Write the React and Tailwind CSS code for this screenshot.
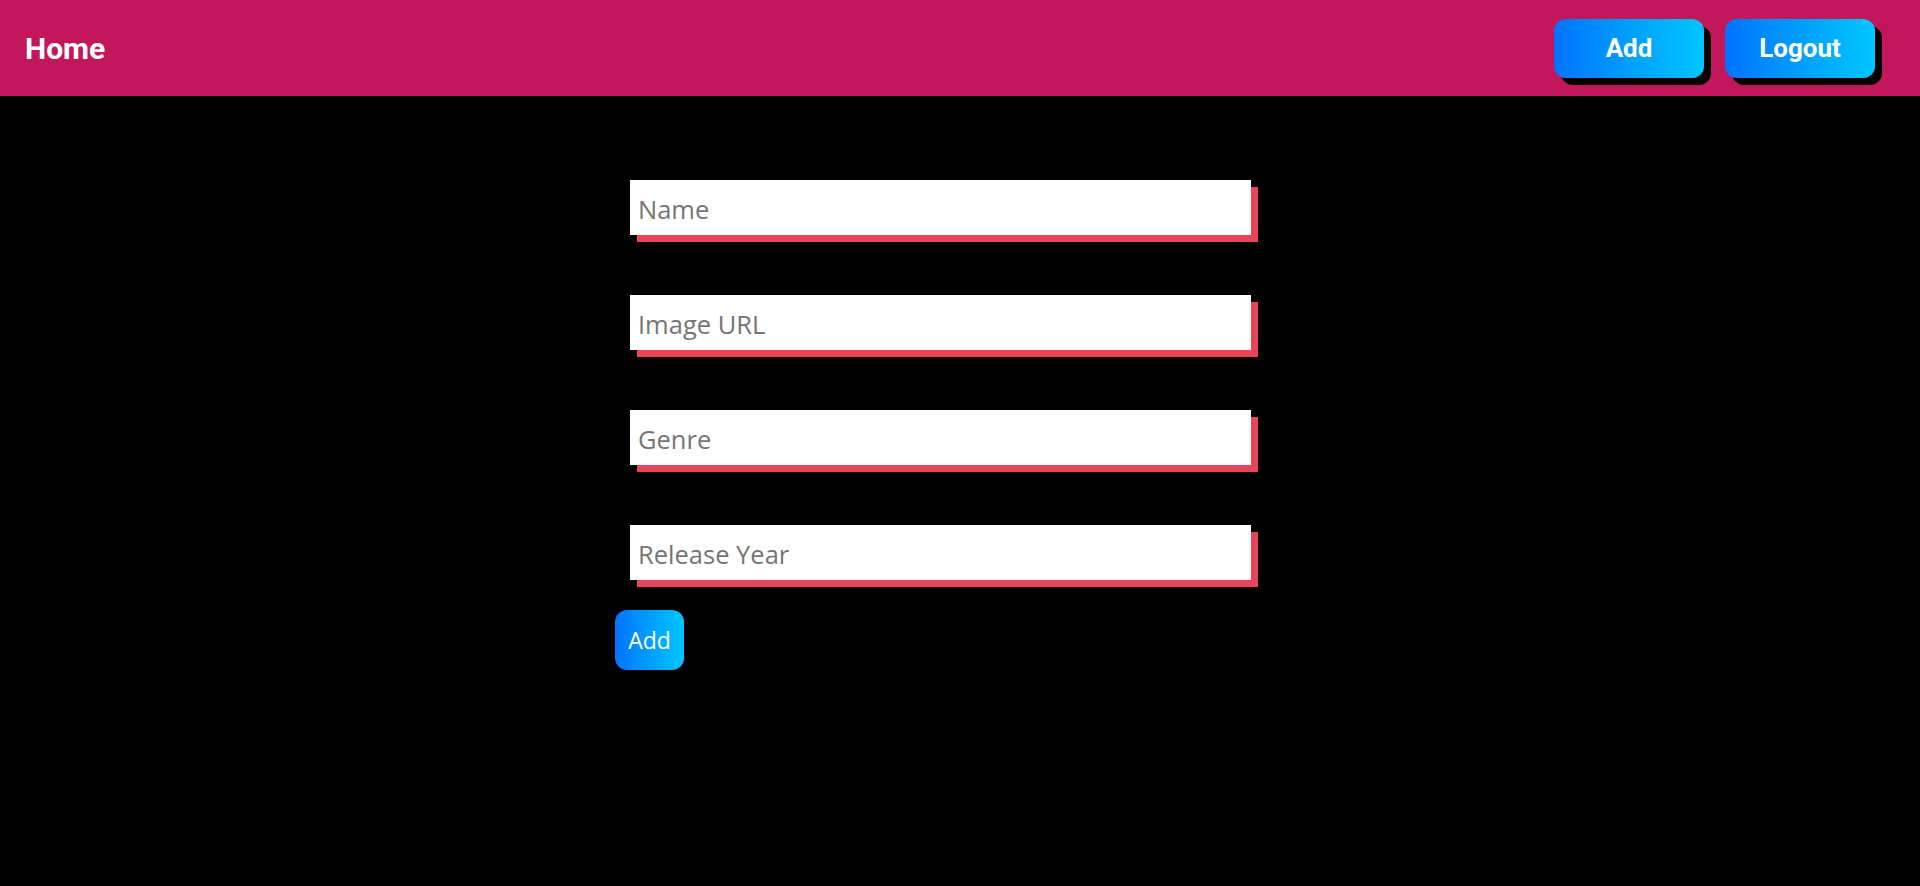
export default function App() {
  const fields = ["Name", "Image URL", "Genre", "Release Year"];
  return (
    <div className="min-h-[886px] w-full bg-black">
      <header className="flex h-[96px] items-center justify-between bg-[#c2185b] pl-[25px] pr-[45px]">
        <div className="font-['Roboto',sans-serif] text-[30px] font-bold text-white">Home</div>
        <div className="flex items-center gap-[21px]">
          <button className="h-[59px] w-[150px] rounded-[12px] bg-gradient-to-r from-[#0072ff] to-[#00c6ff] font-['Roboto',sans-serif] text-[26px] font-bold text-white shadow-[7px_7px_0_#000]">
            Add
          </button>
          <button className="h-[59px] w-[150px] rounded-[12px] bg-gradient-to-r from-[#0072ff] to-[#00c6ff] font-['Roboto',sans-serif] text-[26px] font-bold text-white shadow-[7px_7px_0_#000]">
            Logout
          </button>
        </div>
      </header>
      <div className="flex justify-center">
        <form className="flex w-[690px] flex-col pt-[84px]">
          <div className="flex flex-col gap-[60px]">
            {fields.map((f) => (
              <input
                key={f}
                placeholder={f}
                className="ml-[15px] h-[55px] w-[621px] bg-white pl-[8px] pt-[2px] font-['Open_Sans',sans-serif] text-[25.5px] text-black shadow-[7px_7px_0_#e8445a] outline-none placeholder:text-[#757575]"
              />
            ))}
          </div>
          <div className="mt-[30px]">
            <button
              type="button"
              className="h-[60px] w-[69px] rounded-[12px] bg-gradient-to-r from-[#0072ff] to-[#00c6ff] font-['Open_Sans',sans-serif] text-[23px] text-white"
            >
              Add
            </button>
          </div>
        </form>
      </div>
    </div>
  );
}
